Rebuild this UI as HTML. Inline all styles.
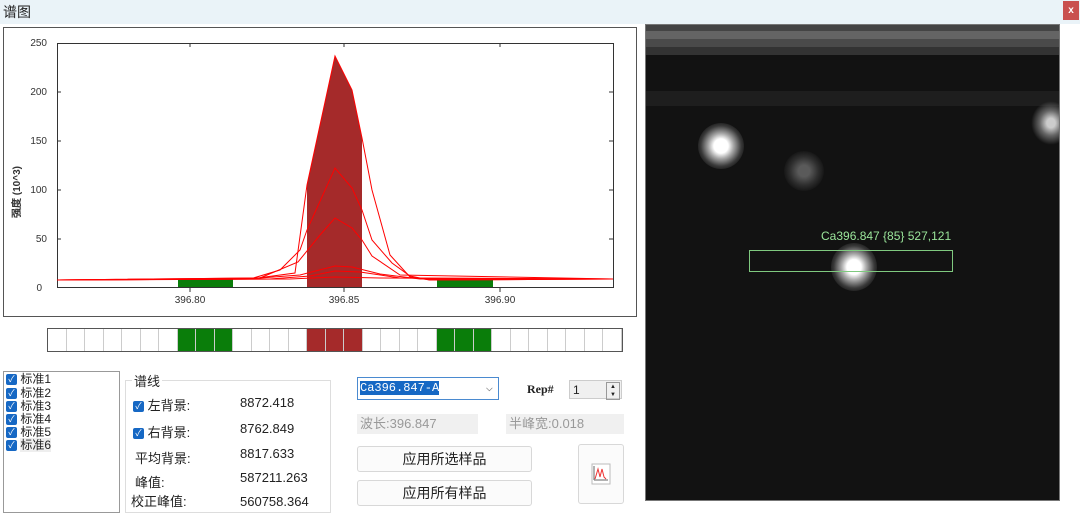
<!DOCTYPE html>
<html><head><meta charset="utf-8"><style>
body{margin:0;width:1080px;height:523px;background:#fff;position:relative;overflow:hidden;font-family:"Liberation Sans","Noto Sans CJK SC",sans-serif;font-size:13px;color:#222}
.a{position:absolute}
.cb{display:inline-block;width:11px;height:11px;background:#1668c4;border-radius:2px;color:#fff;font-size:9px;line-height:11px;text-align:center;vertical-align:middle}
.btn{position:absolute;background:#fbfbfb;border:1px solid #d8d8d8;border-radius:3px;text-align:center;font-size:14px}
</style></head><body>
<div class="a" style="left:0;top:0;width:1080px;height:24px;background:#eaf3f8"></div>
<div class="a" style="left:3px;top:2px;font-size:14px">谱图</div>
<div class="a" style="left:1063px;top:1px;width:16px;height:19px;background:#c9504f;color:#fff;font-size:10px;text-align:center;line-height:19px;font-weight:bold">x</div>
<div class="a" style="left:3px;top:27px;width:632px;height:288px;border:1px solid #555"></div>
<svg class="a" style="left:0;top:0" width="640" height="320">
<g font-size="10" fill="#333" font-family="Liberation Sans">
<text x="47" y="46" text-anchor="end">250</text><text x="47" y="95" text-anchor="end">200</text><text x="47" y="144" text-anchor="end">150</text><text x="47" y="193" text-anchor="end">100</text><text x="47" y="242" text-anchor="end">50</text><text x="42" y="291" text-anchor="end">0</text>
<text x="190" y="303" text-anchor="middle">396.80</text><text x="344" y="303" text-anchor="middle">396.85</text><text x="500" y="303" text-anchor="middle">396.90</text>
<text transform="translate(20,218) rotate(-90)" font-size="10" font-weight="bold">强度 (10^3)</text>
</g>
<rect x="57.5" y="43.5" width="556" height="244" fill="none" stroke="#333"/>
<path d="M57 92h4M57 141h4M57 190h4M57 239h4M613 92h-4M613 141h-4M613 190h-4M613 239h-4M190 287v5M344 287v5M500 287v5M190 43v4M344 43v4M500 43v4" stroke="#333"/>
<rect x="178" y="279" width="55" height="8" fill="#0a7d0a"/><rect x="437" y="279" width="56" height="8" fill="#0a7d0a"/>
<polygon points="307,287 307,185 335,56 352,90 362,138 362,287" fill="#a52a2a"/>
<g fill="none" stroke="#f00" stroke-width="1">
<polyline points="57,280 250,279 295,273 307,185 335,56 352,90 362,138 372,190 390,255 410,277 430,280 613,279"/>
<polyline points="57,280 250,279 280,270 300,250 307,230 335,168 352,188 362,210 372,240 392,263 410,276 430,280 613,279"/>
<polyline points="57,280 260,278 298,262 320,235 335,218 352,228 362,240 372,256 400,275 613,279"/>
<polyline points="57,280 260,278 300,275 335,266 352,267 380,274 420,279 613,279"/>
<polyline points="57,280 270,279 310,276 335,271 360,272 400,278 613,279"/>
<polyline points="57,280 290,279 335,277 380,278 613,279"/>
</g>
</svg>
<div class="a" style="left:47px;top:328px;width:574px;height:22px;border:1px solid #555;display:flex">
<script>for(let i=0;i<31;i++){let c=(i>=7&&i<=9)||(i>=21&&i<=23)?'#0a7d0a':(i>=14&&i<=16)?'#a52a2a':'#fff';document.write('<div style="flex:1;background:'+c+';border-right:1px solid #ccc"></div>')}</script>
</div>
<div class="a" style="left:3px;top:371px;width:115px;height:140px;border:1px solid #999;font-size:12px;line-height:13px">
<div style="padding:1px 2px"><span class="cb">✓</span> 标准1</div>
<div style="padding:0 2px"><span class="cb">✓</span> 标准2</div>
<div style="padding:0 2px"><span class="cb">✓</span> 标准3</div>
<div style="padding:0 2px"><span class="cb">✓</span> 标准4</div>
<div style="padding:0 2px"><span class="cb">✓</span> 标准5</div>
<div style="padding:0 2px"><span class="cb">✓</span> <span style="background:#eee">标准6</span></div>
</div>
<div class="a" style="left:125px;top:380px;width:204px;height:131px;border:1px solid #ddd"></div>
<div class="a" style="left:132px;top:371px;background:#fff;padding:0 2px">谱线</div>
<div class="a" style="left:133px;top:395px"><span class="cb">✓</span> 左背景:</div>
<div class="a" style="left:133px;top:422px"><span class="cb">✓</span> 右背景:</div>
<div class="a" style="left:135px;top:448px">平均背景:</div>
<div class="a" style="left:135px;top:472px">峰值:</div>
<div class="a" style="left:131px;top:491px">校正峰值:</div>
<div class="a" style="left:240px;top:395px">8872.418</div>
<div class="a" style="left:240px;top:421px">8762.849</div>
<div class="a" style="left:240px;top:446px">8817.633</div>
<div class="a" style="left:240px;top:470px">587211.263</div>
<div class="a" style="left:240px;top:494px">560758.364</div>
<div class="a" style="left:357px;top:377px;width:140px;height:21px;border:1px solid #4a8ad0;font-family:'Liberation Mono',monospace;font-size:12px;line-height:21px"><span style="background:#1668c4;color:#fff;margin-left:2px">Ca396.847-A</span><span style="position:absolute;right:5px;color:#777">⌵</span></div>
<div class="a" style="left:527px;top:382px;font-size:12px;font-family:'Liberation Serif',serif;font-weight:bold">Rep#</div>
<div class="a" style="left:569px;top:380px;width:53px;height:19px;background:#f0f0f0;border:1px solid #ccc;font-size:12px;line-height:19px;padding-left:3px;box-sizing:border-box">1<span style="position:absolute;right:1px;top:1px;width:12px;height:16px;border:1px solid #999;font-size:6px;line-height:8px;text-align:center">▲<br>▼</span></div>
<div class="a" style="left:357px;top:414px;width:121px;height:20px;background:#f0f0f0;color:#999;line-height:20px;padding-left:3px;box-sizing:border-box">波长:396.847</div>
<div class="a" style="left:506px;top:414px;width:118px;height:20px;background:#f0f0f0;color:#999;line-height:20px;padding-left:3px;box-sizing:border-box">半峰宽:0.018</div>
<div class="btn" style="left:357px;top:446px;width:173px;height:24px;line-height:24px">应用所选样品</div>
<div class="btn" style="left:357px;top:480px;width:173px;height:24px;line-height:24px">应用所有样品</div>
<div class="btn" style="left:578px;top:444px;width:44px;height:58px"><svg width="20" height="22" style="margin-top:18px"><rect x="1" y="1" width="18" height="20" fill="#fff" stroke="#bbb"/><path d="M3 17h14M3 3v14" stroke="#666"/><path d="M4 16L7 6L9 14L11 6L13 14L15 16" stroke="#e33" fill="none"/></svg></div>
<div class="a" style="left:645px;top:24px;width:415px;height:477px;background:#121212;overflow:hidden;border:1px solid #777;box-sizing:border-box">
<div class="a" style="left:0;top:0;width:100%;height:6px;background:#444"></div>
<div class="a" style="left:0;top:6px;width:100%;height:8px;background:#646464"></div>
<div class="a" style="left:0;top:14px;width:100%;height:8px;background:#4a4a4a"></div>
<div class="a" style="left:0;top:22px;width:100%;height:8px;background:#333"></div>
<div class="a" style="left:0;top:66px;width:100%;height:15px;background:#1e1e1e"></div>
<div class="a" style="left:52px;top:98px;width:46px;height:46px;border-radius:50%;background:radial-gradient(#fff 22%,#aaa 38%,#3a3a3a 62%,transparent 78%)"></div>
<div class="a" style="left:138px;top:126px;width:40px;height:40px;border-radius:50%;background:radial-gradient(#5a5a5a 20%,#2e2e2e 50%,transparent 75%)"></div>
<div class="a" style="left:185px;top:218px;width:46px;height:48px;border-radius:50%;background:radial-gradient(#fff 22%,#aaa 38%,#3a3a3a 62%,transparent 78%)"></div>
<div class="a" style="left:385px;top:76px;width:40px;height:44px;border-radius:50%;background:radial-gradient(#ccc 15%,#666 40%,transparent 70%)"></div>
<div class="a" style="left:103px;top:225px;width:204px;height:22px;border:1px solid #7fc97f;box-sizing:border-box"></div>
<div class="a" style="left:175px;top:204px;color:#9be69b;font-size:12px">Ca396.847 {85} 527,121</div>
</div>
</body></html>
